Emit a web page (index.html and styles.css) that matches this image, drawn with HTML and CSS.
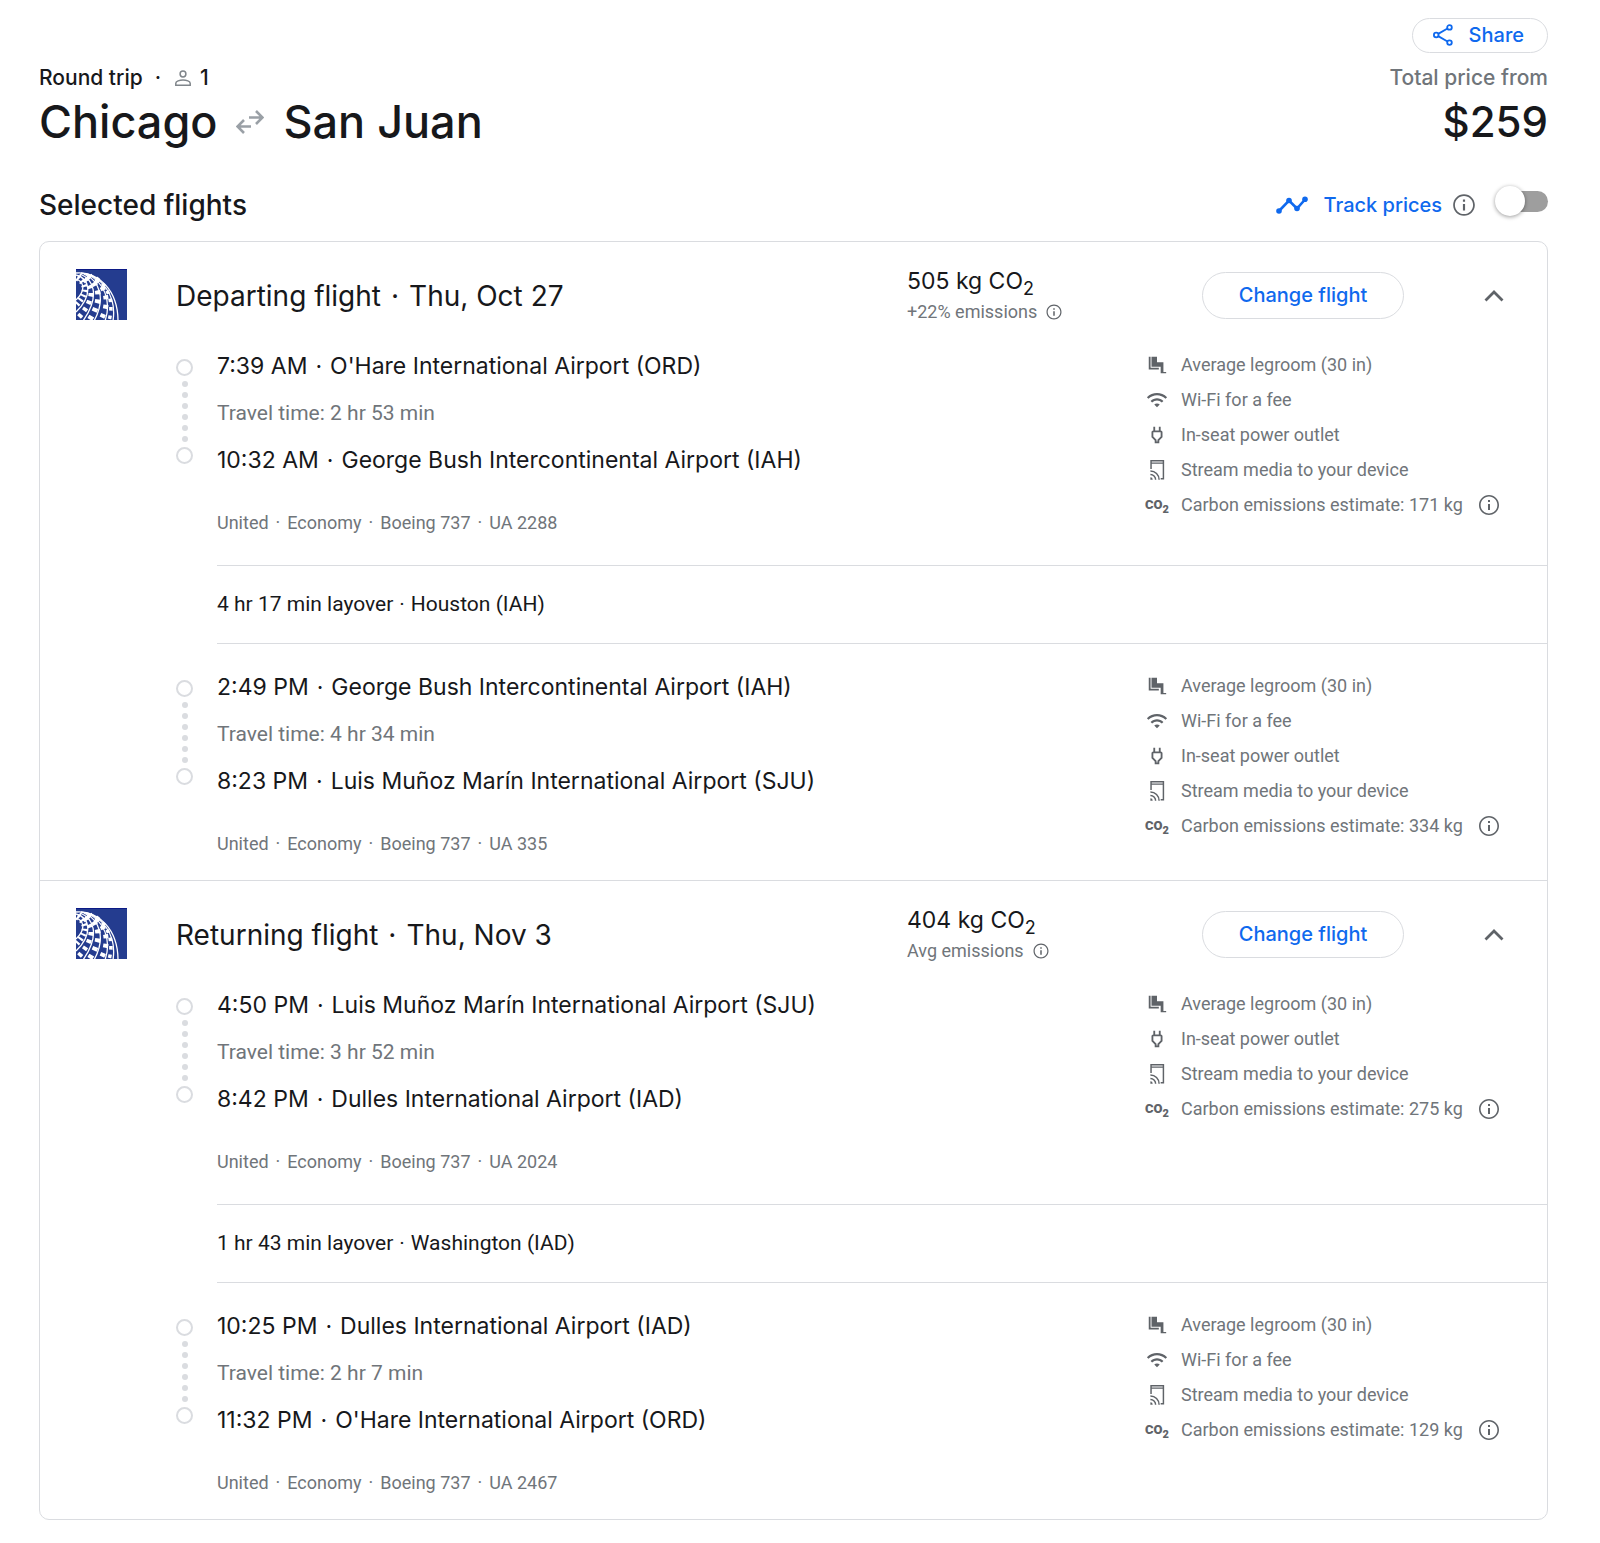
FILE: index.html
```html
<!DOCTYPE html>
<html lang="en">
<head>
<meta charset="utf-8">
<meta name="viewport" content="width=device-width, initial-scale=1">
<title>Chicago to San Juan – Selected flights</title>
<link rel="stylesheet" href="styles.css">
</head>
<body>
<svg class="sprite" aria-hidden="true">
  <defs>
    <clipPath id="logo-box"><path d="M0 0h51v51H0z"/></clipPath>
    <symbol id="united" viewBox="0 0 51 51">
      <path fill="#243c8f" d="M0 0h51v51H0z"/>
      <path fill="#0c1a86" d="M0 0h51v1H0z"/>
      <g clip-path="url(#logo-box)" fill="none" stroke="#fff">
        <g stroke-width="1.300">
          <path d="M0 4C22 2 42 21 42 52"/>
          <path d="M5 4C25 6 41 26 37 52"/>
          <path d="M10 5C28 12 36 32 29 52"/>
          <path d="M8 5C24 12 30 30 18 52"/>
          <path d="M4 5C17 10 25 26 7 52"/>
          <path d="M0 6C12 9 19 24 0 43"/>
          <path d="M0 10C7 12 11 20 0 31"/>
        </g>
        <path stroke-width="3.500" stroke-dasharray="3.500 5" d="M20 9C33 18 38 34 33 52"/>
        <path stroke-width="5" stroke-dasharray="4 5.500" stroke-dashoffset="3" d="M14 7C31 17 35 34 24 52"/>
        <path stroke-width="5.500" stroke-dasharray="4 5" stroke-dashoffset="6" d="M8 6C25 15 27 32 12 53"/>
        <path stroke-width="5" stroke-dasharray="3.500 4.500" stroke-dashoffset="2" d="M3 7C17 14 21 28 3 48"/>
        <path stroke-width="6" stroke-dasharray="2 3" d="M1 9C9 13 14 22 0 36"/>
      </g>
    </symbol>
    <symbol id="info" viewBox="0 0 24 24"><path fill="currentColor" d="M11 7h2v2h-2zm0 4h2v6h-2zm1-9C6.480 2 2 6.480 2 12s4.480 10 10 10 10-4.480 10-10S17.520 2 12 2zm0 18.400c-4.630 0-8.400-3.770-8.400-8.400S7.370 3.600 12 3.600s8.400 3.770 8.400 8.400-3.770 8.400-8.400 8.400z"/></symbol>
    <symbol id="seat" viewBox="0 0 24 24"><path fill="currentColor" d="M5 15V3H3v14h11v-2zM22 19.500h-3V9h-7V3H6v11h10v7h6z"/></symbol>
    <symbol id="wifi" viewBox="0 0 24 24"><path fill="currentColor" d="M1 9l1.700 1.700c5.130-5.130 13.470-5.130 18.600 0L23 9C16.930 2.930 7.080 2.930 1 9zm8 8l3 3 3-3c-1.650-1.660-4.340-1.660-6 0zm-4-4l1.700 1.700c2.930-2.930 7.670-2.930 10.600 0L19 13C15.140 9.140 8.870 9.140 5 13z"/></symbol>
    <symbol id="plug" viewBox="0 0 24 24"><path fill="currentColor" d="M16 9v4.660l-3.500 3.510V19h-1v-1.830L8 13.650V9h8m0-6h-2v4h-4V3H8v4C6.900 7 6 7.900 6 9v5.500L9.500 18v3h5v-3l3.500-3.500V9c0-1.100-.9-2-2-2V3z"/></symbol>
    <symbol id="stream" viewBox="0 0 24 24"><g fill="none" stroke="currentColor" stroke-width="1.600"><path d="M5.500 11V1.800h13.500v19.700H16M5.500 4.500H19"/><path d="M4.800 13a9.500 9.500 0 0 1 9.500 9.500M4.800 16.800a5.700 5.700 0 0 1 5.700 5.700"/></g><path fill="currentColor" d="M4.800 20a2.500 2.500 0 0 1 2.500 2.500H4.800z"/></symbol>
    <symbol id="chevron" viewBox="0 0 24 24"><path fill="none" stroke="currentColor" stroke-width="2.800" d="M3.500 16.500L12 8l8.500 8.500"/></symbol>
  </defs>
</svg>

<main class="page">
  <header class="trip">
    <div class="trip-route">
      <p class="trip-meta"><span>Round trip</span><span>·</span>
        <span class="passengers"><svg class="icon-person" viewBox="0 0 16 16" aria-hidden="true"><g fill="none" stroke="currentColor" stroke-width="1.500"><circle cx="8" cy="4" r="2.900"/><path d="M.8 15.200v-2C.8 11.300 4.600 10 8 10s7.200 1.300 7.200 3.200v2z"/></g></svg>1</span></p>
      <h1 class="trip-title">Chicago
        <svg class="icon-swap" viewBox="0 0 28 24" role="img" aria-label="to and from"><path fill="none" stroke="currentColor" stroke-width="2.600" d="M13 7.500h13M20 1l6.500 6.500L20 14M15 16.500H2M8 10l-6.500 6.500L8 23"/></svg>
        San Juan</h1>
    </div>
    <div class="trip-price">
      <button class="pill share" type="button"><svg class="icon-share" viewBox="0 0 20 22" aria-hidden="true"><g fill="none" stroke="currentColor" stroke-width="1.800"><circle cx="3.200" cy="11" r="2.300"/><circle cx="16.500" cy="3.400" r="2.300"/><circle cx="16.500" cy="18.600" r="2.300"/><path d="M5.200 9.900l9.300-5.400M5.200 12.100l9.300 5.400"/></g></svg>Share</button>
      <p class="price-label">Total price from</p>
      <p class="price">$259</p>
    </div>
  </header>

  <div class="section-bar">
    <h2 class="section-title">Selected flights</h2>
    <div class="track">
      <svg class="icon-track" viewBox="0 0 32 18" aria-hidden="true"><path fill="none" stroke="currentColor" stroke-width="2.600" d="M3 15L13 4.500l8 8L29 3.500"/><g fill="currentColor"><circle cx="3" cy="15" r="2.800"/><circle cx="13" cy="4.500" r="2.800"/><circle cx="21" cy="12.500" r="2.800"/><circle cx="29" cy="3.200" r="2.800"/></g></svg>
      <label class="track-label" for="track-prices">Track prices</label>
      <button class="info info-lg" type="button" aria-label="About price tracking"><svg><use href="#info"/></svg></button>
      <input class="toggle" type="checkbox" role="switch" id="track-prices">
    </div>
  </div>

  <div class="card">
    <section class="flight">
      <header class="flight-head">
        <svg class="logo" role="img" aria-label="United"><use href="#united"/></svg>
        <h3 class="flight-title"><span>Departing flight</span><span>·</span><span>Thu, Oct 27</span></h3>
        <div class="emissions">
          <p class="co2">505 kg CO<sub>2</sub></p>
          <p class="co2-note">+22% emissions <button class="info info-sm" type="button" aria-label="About emissions"><svg><use href="#info"/></svg></button></p>
        </div>
        <button class="pill change" type="button">Change flight</button>
        <button class="collapse" type="button" aria-label="Collapse departing flight" aria-expanded="true"><svg><use href="#chevron"/></svg></button>
      </header>
      <div class="leg">
        <div class="timeline" aria-hidden="true"><i class="stop"></i><i class="dot"></i><i class="dot"></i><i class="dot"></i><i class="dot"></i><i class="dot"></i><i class="dot"></i><i class="stop"></i></div>
        <div class="leg-main">
          <p class="place"><span>7:39 AM</span><span>·</span><span>O'Hare International Airport (ORD)</span></p>
          <p class="duration">Travel time: 2 hr 53 min</p>
          <p class="place"><span>10:32 AM</span><span>·</span><span>George Bush Intercontinental Airport (IAH)</span></p>
          <p class="details"><span>United</span><span>·</span><span>Economy</span><span>·</span><span>Boeing 737</span><span>·</span><span>UA 2288</span></p>
        </div>
        <ul class="amenities">
          <li><svg><use href="#seat"/></svg>Average legroom (30 in)</li>
          <li><svg><use href="#wifi"/></svg>Wi-Fi for a fee</li>
          <li><svg><use href="#plug"/></svg>In-seat power outlet</li>
          <li><svg><use href="#stream"/></svg>Stream media to your device</li>
          <li><span class="co2-mark">CO<sub>2</sub></span><span>Carbon emissions estimate: 171 kg</span><button class="info" type="button" aria-label="About this estimate"><svg><use href="#info"/></svg></button></li>
        </ul>
      </div>
      <p class="layover"><span>4 hr 17 min layover</span><span>·</span><span>Houston (IAH)</span></p>
      <div class="leg leg-next">
        <div class="timeline" aria-hidden="true"><i class="stop"></i><i class="dot"></i><i class="dot"></i><i class="dot"></i><i class="dot"></i><i class="dot"></i><i class="dot"></i><i class="stop"></i></div>
        <div class="leg-main">
          <p class="place"><span>2:49 PM</span><span>·</span><span>George Bush Intercontinental Airport (IAH)</span></p>
          <p class="duration">Travel time: 4 hr 34 min</p>
          <p class="place"><span>8:23 PM</span><span>·</span><span>Luis Muñoz Marín International Airport (SJU)</span></p>
          <p class="details"><span>United</span><span>·</span><span>Economy</span><span>·</span><span>Boeing 737</span><span>·</span><span>UA 335</span></p>
        </div>
        <ul class="amenities">
          <li><svg><use href="#seat"/></svg>Average legroom (30 in)</li>
          <li><svg><use href="#wifi"/></svg>Wi-Fi for a fee</li>
          <li><svg><use href="#plug"/></svg>In-seat power outlet</li>
          <li><svg><use href="#stream"/></svg>Stream media to your device</li>
          <li><span class="co2-mark">CO<sub>2</sub></span><span>Carbon emissions estimate: 334 kg</span><button class="info" type="button" aria-label="About this estimate"><svg><use href="#info"/></svg></button></li>
        </ul>
      </div>
    </section>

    <section class="flight">
      <header class="flight-head">
        <svg class="logo" role="img" aria-label="United"><use href="#united"/></svg>
        <h3 class="flight-title"><span>Returning flight</span><span>·</span><span>Thu, Nov 3</span></h3>
        <div class="emissions">
          <p class="co2">404 kg CO<sub>2</sub></p>
          <p class="co2-note">Avg emissions <button class="info info-sm" type="button" aria-label="About emissions"><svg><use href="#info"/></svg></button></p>
        </div>
        <button class="pill change" type="button">Change flight</button>
        <button class="collapse" type="button" aria-label="Collapse returning flight" aria-expanded="true"><svg><use href="#chevron"/></svg></button>
      </header>
      <div class="leg">
        <div class="timeline" aria-hidden="true"><i class="stop"></i><i class="dot"></i><i class="dot"></i><i class="dot"></i><i class="dot"></i><i class="dot"></i><i class="dot"></i><i class="stop"></i></div>
        <div class="leg-main">
          <p class="place"><span>4:50 PM</span><span>·</span><span>Luis Muñoz Marín International Airport (SJU)</span></p>
          <p class="duration">Travel time: 3 hr 52 min</p>
          <p class="place"><span>8:42 PM</span><span>·</span><span>Dulles International Airport (IAD)</span></p>
          <p class="details"><span>United</span><span>·</span><span>Economy</span><span>·</span><span>Boeing 737</span><span>·</span><span>UA 2024</span></p>
        </div>
        <ul class="amenities">
          <li><svg><use href="#seat"/></svg>Average legroom (30 in)</li>
          <li><svg><use href="#plug"/></svg>In-seat power outlet</li>
          <li><svg><use href="#stream"/></svg>Stream media to your device</li>
          <li><span class="co2-mark">CO<sub>2</sub></span><span>Carbon emissions estimate: 275 kg</span><button class="info" type="button" aria-label="About this estimate"><svg><use href="#info"/></svg></button></li>
        </ul>
      </div>
      <p class="layover"><span>1 hr 43 min layover</span><span>·</span><span>Washington (IAD)</span></p>
      <div class="leg leg-next">
        <div class="timeline" aria-hidden="true"><i class="stop"></i><i class="dot"></i><i class="dot"></i><i class="dot"></i><i class="dot"></i><i class="dot"></i><i class="dot"></i><i class="stop"></i></div>
        <div class="leg-main">
          <p class="place"><span>10:25 PM</span><span>·</span><span>Dulles International Airport (IAD)</span></p>
          <p class="duration">Travel time: 2 hr 7 min</p>
          <p class="place"><span>11:32 PM</span><span>·</span><span>O'Hare International Airport (ORD)</span></p>
          <p class="details"><span>United</span><span>·</span><span>Economy</span><span>·</span><span>Boeing 737</span><span>·</span><span>UA 2467</span></p>
        </div>
        <ul class="amenities">
          <li><svg><use href="#seat"/></svg>Average legroom (30 in)</li>
          <li><svg><use href="#wifi"/></svg>Wi-Fi for a fee</li>
          <li><svg><use href="#stream"/></svg>Stream media to your device</li>
          <li><span class="co2-mark">CO<sub>2</sub></span><span>Carbon emissions estimate: 129 kg</span><button class="info" type="button" aria-label="About this estimate"><svg><use href="#info"/></svg></button></li>
        </ul>
      </div>
    </section>
  </div>
</main>
</body>
</html>
```

FILE: styles.css
```css
:root {
  --ink: #17181b;
  --muted: #70757a;
  --icon: #5f6368;
  --line: #dadce0;
  --blue: #0f69ee;
  --display: Inter, "Open Sans", sans-serif;
  --body: Roboto, "Liberation Sans", sans-serif;
}

* { box-sizing: border-box; }

body {
  margin: 0;
  background: #fff;
  color: var(--ink);
  font-family: var(--body);
}

h1, h2, h3, p, ul { margin: 0; padding: 0; font-weight: 400; }
ul { list-style: none; }

button {
  margin: 0;
  padding: 0;
  border: 0;
  background: none;
  color: inherit;
  font: inherit;
  cursor: pointer;
}

svg { display: block; flex: none; }
sub { line-height: 0; vertical-align: sub; }

.sprite { position: absolute; width: 0; height: 0; }

.page { padding: 18px 52px 23px 39px; }

/* Trip summary */
.trip {
  display: flex;
  justify-content: space-between;
  align-items: flex-end;
}

.trip-meta {
  display: flex;
  gap: 12px;
  font: 500 21px/24px var(--display);
}

.passengers { display: flex; align-items: center; gap: 9px; padding-left: 2px; }
.icon-person { width: 16px; height: 16px; color: #80868b; }

.trip-title {
  display: flex;
  align-items: center;
  gap: 19px;
  margin-top: 5px;
  font: 500 45px/54px var(--display);
}

.icon-swap { width: 28px; height: 24px; color: #9aa0a6; }

.trip-price {
  display: flex;
  flex-direction: column;
  align-items: flex-end;
}

.price-label {
  margin-top: 13px;
  color: var(--muted);
  font: 500 21px/24px var(--display);
}

.price { margin-top: 5px; font: 500 42px/54px var(--display); }

.pill {
  display: flex;
  align-items: center;
  justify-content: center;
  border: 1px solid var(--line);
  border-radius: 24px;
  color: var(--blue);
  font: 500 20px/24px var(--display);
}

.share { gap: 16px; height: 35px; padding: 0 23px 2px 20px; }
.icon-share { width: 20px; height: 22px; }

/* Section bar */
.section-bar {
  display: flex;
  justify-content: space-between;
  margin-top: 37px;
}

.section-title { font: 500 28px/38px var(--display); }

.track { display: flex; align-items: center; color: var(--blue); }
.icon-track { width: 32px; height: 18px; margin-right: 16px; }
.track-label { margin-right: 9px; font: 500 20px/24px var(--display); }

.toggle {
  position: relative;
  align-self: flex-start;
  width: 44px;
  height: 21px;
  margin: 5px 0 0 27px;
  border-radius: 11px;
  background: #9e9e9e;
  appearance: none;
}

.toggle::before {
  content: "";
  position: absolute;
  top: -5px;
  left: -9px;
  width: 30px;
  height: 30px;
  border-radius: 50%;
  background: #fff;
  box-shadow: 0 1px 4px rgba(0, 0, 0, 0.4);
}

.toggle:checked { background: #8ab4f8; }
.toggle:checked::before { left: 18px; background: var(--blue); }

.info { color: var(--icon); }
.info svg { width: 24px; height: 24px; }
.info-lg svg { width: 26px; height: 26px; }
.info-sm svg { width: 18px; height: 18px; }

/* Flight card */
.card {
  margin-top: 17px;
  border: 1px solid var(--line);
  border-radius: 10px;
}

.flight + .flight { border-top: 1px solid var(--line); }

.flight-head {
  display: flex;
  height: 101px;
  padding: 27px 41px 0 36px;
}

.logo { width: 51px; height: 51px; margin-right: 49px; }

.flight-title {
  display: flex;
  flex: 1;
  gap: 10px;
  font: 400 28px/54px var(--display);
}

.emissions { width: 295px; }
.co2 { font: 400 23px/24px var(--display); }
.co2 sub { font-size: 18px; }

.co2-note {
  display: flex;
  align-items: center;
  gap: 8px;
  margin-top: 7px;
  color: var(--muted);
  font-size: 18px;
  line-height: 24px;
}

.change { width: 202px; height: 47px; margin: 3px 78px 0 0; padding-bottom: 2px; }
.collapse { height: 54px; color: var(--icon); }
.collapse svg { width: 24px; height: 24px; }

/* Legs */
.leg {
  display: flex;
  padding: 0 0 30px 136px;
}

.leg-next { padding-top: 20px; padding-bottom: 24px; }

.timeline {
  display: flex;
  flex-direction: column;
  align-items: center;
  gap: 5px;
  width: 17px;
  margin-right: 24px;
  padding-top: 16px;
}

.stop {
  width: 17px;
  height: 17px;
  border: 2px solid var(--line);
  border-radius: 50%;
}

.dot {
  width: 6px;
  height: 6px;
  border-radius: 50%;
  background: var(--line);
}

.leg-main { flex: 1; }

.place {
  display: flex;
  gap: 8px;
  font: 400 23px/47px var(--display);
}

.duration { color: var(--muted); font-size: 21px; line-height: 47px; }

.details {
  display: flex;
  gap: 7px;
  margin-top: 27px;
  color: var(--muted);
  font-size: 18px;
  line-height: 24px;
}

.amenities { width: 402px; padding-top: 4px; }

.amenities li {
  display: flex;
  align-items: center;
  gap: 12px;
  height: 35px;
  color: var(--muted);
  font-size: 18px;
}

.amenities li > svg { width: 24px; height: 22px; color: var(--icon); }
.amenities .info { margin-left: 2px; }

.co2-mark {
  width: 24px;
  color: var(--icon);
  font: 900 13px/24px var(--body);
}

.co2-mark sub { font-size: 11px; }

.layover {
  display: flex;
  gap: 6px;
  margin-left: 177px;
  border: solid var(--line);
  border-width: 1px 0;
  font-size: 21px;
  line-height: 77px;
}
```
